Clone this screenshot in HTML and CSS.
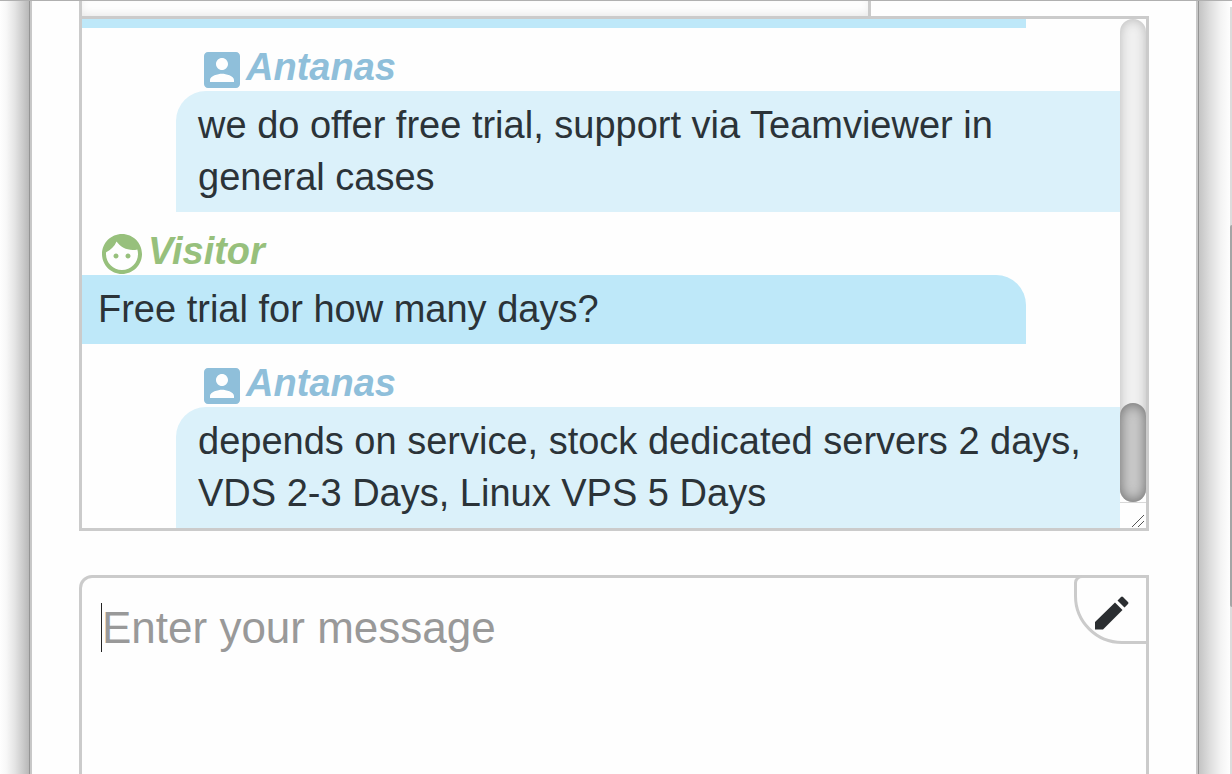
FILE: index.html
```
<!DOCTYPE html>
<html lang="en">
<head>
    <meta charset="UTF-8">
    <meta name="viewport" content="width=device-width, initial-scale=1.0">
    <title>Live chat</title>
    <link rel="stylesheet" href="styles.css">
</head>
<body>
    <div class="gutter gutter-left"></div>

    <main class="panel">
        <div class="info-box"></div>

        <section class="chat">
            <div class="messages">
                <div class="bubble visitor-bubble previous"></div>

                <div class="author agent">
                    <svg class="icon-agent" viewBox="3 3 18 18"><path d="M3 5v14c0 1.1.89 2 2 2h14c1.1 0 2-.9 2-2V5c0-1.1-.9-2-2-2H5c-1.11 0-2 .9-2 2zm12 4c0 1.66-1.34 3-3 3s-3-1.34-3-3 1.34-3 3-3 3 1.34 3 3zm-9 8c0-2 4-3.1 6-3.1s6 1.1 6 3.1v1H6v-1z"/></svg>
                    <span>Antanas</span>
                </div>
                <p class="bubble agent-bubble">we do offer free trial, support via Teamviewer in general cases</p>

                <div class="author visitor">
                    <svg class="icon-visitor" viewBox="2 2 20 20"><path d="M9 11.75c-.69 0-1.25.56-1.25 1.25s.56 1.25 1.25 1.25 1.25-.56 1.25-1.25-.56-1.25-1.25-1.25zm6 0c-.69 0-1.25.56-1.25 1.25s.56 1.25 1.25 1.25 1.25-.56 1.25-1.25-.56-1.25-1.25-1.25zM12 2C6.48 2 2 6.48 2 12s4.48 10 10 10 10-4.48 10-10S17.52 2 12 2zm0 18c-4.41 0-8-3.59-8-8 0-.29.02-.58.05-.86 2.36-1.05 4.23-2.98 5.21-5.37C11.07 8.33 14.05 10 17.42 10c.78 0 1.53-.09 2.25-.26.21.71.33 1.47.33 2.26 0 4.41-3.59 8-8 8z"/></svg>
                    <span>Visitor</span>
                </div>
                <p class="bubble visitor-bubble">Free trial for how many days?</p>

                <div class="author agent">
                    <svg class="icon-agent" viewBox="3 3 18 18"><path d="M3 5v14c0 1.1.89 2 2 2h14c1.1 0 2-.9 2-2V5c0-1.1-.9-2-2-2H5c-1.11 0-2 .9-2 2zm12 4c0 1.66-1.34 3-3 3s-3-1.34-3-3 1.34-3 3-3 3 1.34 3 3zm-9 8c0-2 4-3.1 6-3.1s6 1.1 6 3.1v1H6v-1z"/></svg>
                    <span>Antanas</span>
                </div>
                <p class="bubble agent-bubble">depends on service, stock dedicated servers 2 days, VDS 2-3 Days, Linux VPS 5 Days</p>
            </div>

            <div class="scrollbar">
                <div class="track"><div class="thumb"></div></div>
                <div class="resizer">
                    <svg viewBox="0 0 12 12"><path d="M0 12L12 0M6 12L12 6"/></svg>
                </div>
            </div>
        </section>

        <form class="composer">
            <textarea class="message-input" placeholder="Enter your message" aria-label="Enter your message"></textarea>
            <span class="caret"></span>
            <button type="button" class="edit-btn" aria-label="Edit">
                <svg viewBox="0 0 34 34"><path d="M0 26L20 6.500L27.500 14L8 33.500H0zM22.500 4.500L26 1Q27 0 28 1L33 6Q34 7 33 8L29.500 11.500z"/></svg>
            </button>
        </form>
    </main>

    <div class="gutter gutter-right">
        <div class="page-track"><div class="page-thumb"></div></div>
    </div>
</body>
</html>
```
FILE: styles.css
```
* {
    box-sizing: border-box;
    margin: 0;
    padding: 0;
}
body {
    display: flex;
    height: 100vh;
    overflow: hidden;
    border-top: 1px solid #b0b0b0;
    background-color: #fefefe;
    color: #2b3338;
    font-family: "Liberation Sans", Arial, sans-serif;
}
.gutter {
    display: flex;
    flex-shrink: 0;
}
.gutter-left {
    width: 30px;
    border-right: 1px solid #949494;
    background: linear-gradient(to right, #fefefe 0, #f8f8f8 6px, #e4e4e4 15px, #b8b8b8 29px);
}
.gutter-right {
    width: 34px;
    justify-content: flex-end;
    border-left: 1px solid #949494;
    background: linear-gradient(to right, #c4c4c4 0, #dedede 11px, #f4f4f4 22px, #fefefe 31px);
}
.page-track {
    width: 2px;
    margin-top: 6px;
    padding-top: 218px;
    background-color: #dcdcdc;
}
.page-thumb {
    height: 382px;
    border-radius: 2px 0 0 2px;
    background-color: #a5a5a5;
}
.panel {
    display: flex;
    flex: 1;
    flex-direction: column;
    min-width: 0;
    padding: 0 47px;
    border: solid #c8c8c8;
    border-width: 0 2px;
    background-color: #fefefe;
}
/* bottom end of the box above the chat */
.info-box {
    flex-shrink: 0;
    width: 74%;
    height: 15px;
    border: solid #cbcbcb;
    border-width: 0 3px;
    box-shadow: inset 0 -4px 12px -4px #e0e0e0;
}
.chat {
    display: flex;
    flex-shrink: 0;
    border: 3px solid #cbcbcb;
}
.messages {
    flex: 1;
    min-width: 0;
}
.author {
    display: flex;
    align-items: center;
    height: 63px;
    padding-top: 16px;
    font-size: 38px;
    font-style: italic;
    font-weight: bold;
}
.author svg {
    flex-shrink: 0;
    margin-top: 4px;
    fill: currentColor;
}
.agent {
    gap: 6px;
    padding-left: 122px;
    color: #8fbfda;
}
.visitor {
    gap: 6px;
    padding-left: 20px;
    color: #97c07c;
}
.icon-agent {
    width: 36px;
    height: 36px;
}
.icon-visitor {
    width: 40px;
    height: 40px;
}
.bubble {
    padding: 8px 16px 9px;
    font-size: 38px;
    line-height: 52px;
}
.agent-bubble {
    margin-left: 94px;
    padding-left: 22px;
    border-top-left-radius: 30px;
    background-color: #dbf1fa;
}
.visitor-bubble {
    margin-right: 94px;
    border-top-right-radius: 30px;
    background-color: #bee8f9;
}
.previous {
    height: 9px;
    padding: 0;
    border-radius: 0;
}
.scrollbar {
    display: flex;
    flex-direction: column;
    width: 26px;
}
.track {
    display: flex;
    flex: 1;
    flex-direction: column;
    justify-content: flex-end;
    border-radius: 13px;
    background-color: #f1f1f1;
    box-shadow: inset 0 0 12px #b8b8b8;
}
.thumb {
    height: 99px;
    border-radius: 13px;
    background-color: #cbcbcb;
    box-shadow: inset 0 0 14px #666;
}
.resizer {
    display: flex;
    align-items: flex-end;
    justify-content: flex-end;
    height: 26px;
    padding: 0 2px 1px 0;
    border-top: 1px solid #d8d8d8;
}
.resizer svg {
    width: 12px;
    height: 12px;
    fill: none;
    stroke: #555;
}
.composer {
    display: flex;
    flex: 1;
    position: relative;
    margin-top: 44px;
}
.message-input {
    flex: 1;
    min-width: 0;
    padding: 24px 20px;
    border: 3px solid #cbcbcb;
    border-bottom: 0;
    border-radius: 13px 0 0 0;
    outline: none;
    resize: none;
    background-color: #fefefe;
    color: #2b3338;
    font-family: inherit;
    font-size: 44px;
    line-height: 52px;
}
.message-input::placeholder {
    color: #999;
    opacity: 1;
}
.caret {
    position: absolute;
    top: 28px;
    left: 22px;
    width: 1px;
    height: 49px;
    background-color: #222;
}
.edit-btn {
    display: flex;
    align-items: center;
    justify-content: center;
    position: absolute;
    top: 0;
    right: 0;
    width: 75px;
    height: 69px;
    padding-top: 6px;
    border: 3px solid #cbcbcb;
    border-radius: 8px 0 0 48px;
    background-color: #fefefe;
    cursor: pointer;
}
.edit-btn svg {
    width: 34px;
    height: 34px;
    fill: #2b2e31;
}
```
